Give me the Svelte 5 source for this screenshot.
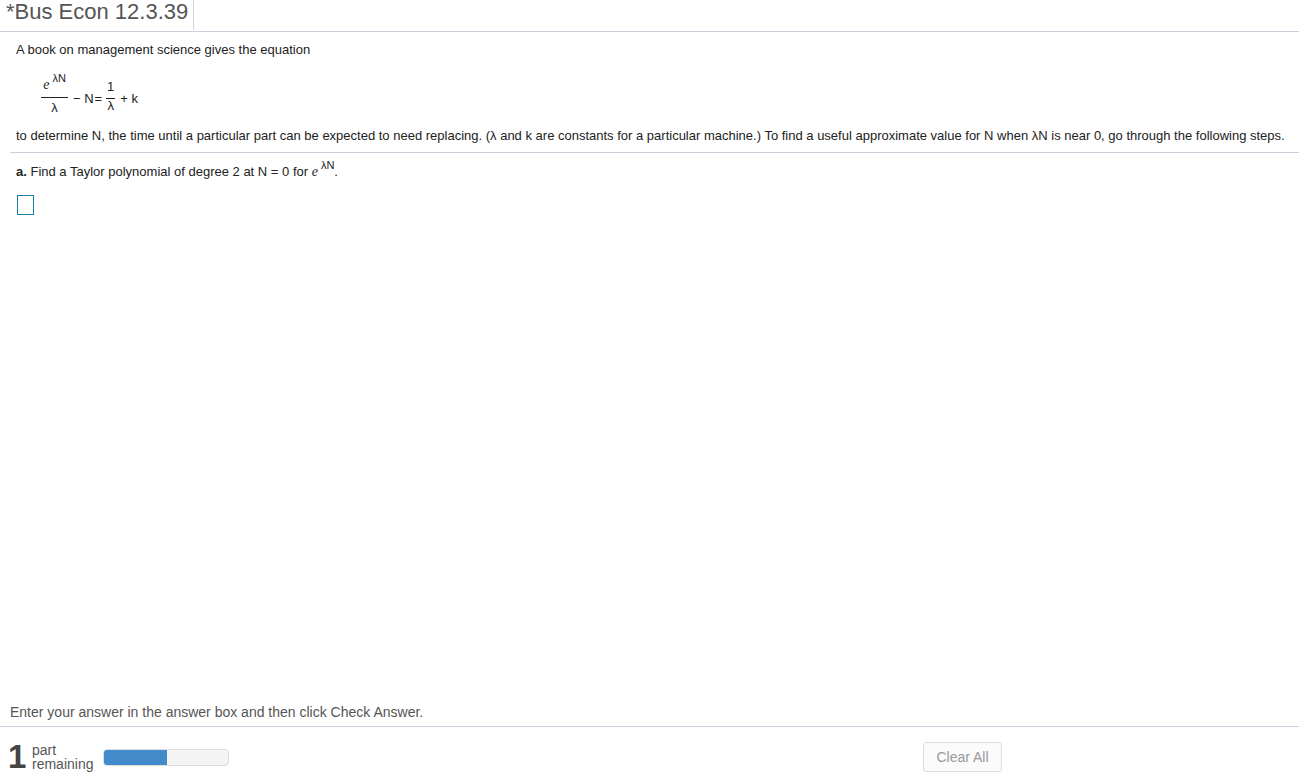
<script>
  const progress = 51;
</script>

<div class="page">
  <header class="titlebar">
    <h1 class="title">*Bus Econ 12.3.39</h1>
  </header>

  <main class="question">
    <p class="intro">A book on management science gives the equation</p>

    <div class="equation">
      <span class="frac first">
        <span class="num"><i class="e">e</i><span class="sup">λN</span></span>
        <span class="den">λ</span>
      </span>
      <span class="mid">− N<span class="eq">=</span></span>
      <span class="frac second">
        <span class="num">1</span>
        <span class="den">λ</span>
      </span>
      <span class="tail">+ k</span>
    </div>

    <p class="para">to determine N, the time until a particular part can be expected to need replacing. (λ and k are constants for a particular machine.) To find a useful approximate value for N when λN is near 0, go through the following steps.</p>
  </main>

  <hr class="rule" />

  <section class="part">
    <p class="parta"><b>a.</b> Find a Taylor polynomial of degree 2 at N = 0 for <i class="e">e</i><span class="supa">λN</span>.</p>
    <div class="answer"></div>
  </section>

  <footer class="bottom">
    <p class="hint">Enter your answer in the answer box and then click Check Answer.</p>
    <div class="bar">
      <span class="count">1</span>
      <span class="label">part<br />remaining</span>
      <div class="track"><div class="fill" style="width: {progress}%"></div></div>
      <button class="clear" disabled>Clear All</button>
    </div>
  </footer>
</div>

<style>
  :global(body) {
    margin: 0;
    background: #fff;
  }
  .page {
    height: 777px;
    width: 1299px;
    display: flex;
    flex-direction: column;
    overflow: hidden;
    font-family: "Liberation Sans", Arial, sans-serif;
    font-size: 13px;
    color: #222;
  }
  .titlebar {
    height: 31px;
    border-bottom: 1px solid #ccd0dc;
    flex: none;
  }
  .title {
    display: inline-block;
    margin: 0;
    height: 30px;
    padding: 0 5px 0 6px;
    border-right: 1px solid #d0d4de;
    font-size: 22px;
    font-weight: 400;
    line-height: 24px;
    color: #555;
  }
  .question {
    padding: 0 0 0 16px;
  }
  .intro {
    margin: 10px 0 0;
    line-height: 15px;
  }
  .equation {
    display: flex;
    align-items: center;
    margin: 13px 0 0 25px;
    height: 56px;
  }
  .frac {
    display: flex;
    flex-direction: column;
    align-items: center;
    align-self: flex-start;
  }
  .num {
    border-bottom: 1px solid #222;
    text-align: center;
    line-height: 14px;
    width: 100%;
    padding-bottom: 4px;
  }
  .den {
    line-height: 13px;
  }
  .first {
    width: 27px;
  }
  .first .num {
    height: 20px;
    line-height: 15px;
    padding: 7px 0 0;
  }
  .first .den {
    padding-top: 3px;
  }
  .second {
    width: 9px;
    margin: 10px 0 0 4px;
  }
  .mid {
    margin-left: 5px;
  }
  .eq {
    margin-left: 1px;
  }
  .tail {
    margin-left: 5px;
  }
  .e {
    font-family: "Liberation Serif", serif;
    font-size: 14px;
  }
  .sup {
    font-size: 11px;
    position: relative;
    top: -7px;
    margin-left: 3px;
  }
  .para {
    margin: 2px 0 0;
    line-height: 15px;
    white-space: nowrap;
  }
  .rule {
    margin: 9px 0 0 10px;
    border: 0;
    border-top: 1px solid #ccd0dc;
  }
  .part {
    padding-left: 16px;
    flex: 1;
  }
  .parta {
    margin: 11px 0 0;
    line-height: 15px;
  }
  .supa {
    font-size: 11px;
    position: relative;
    top: -7px;
    margin-left: 3px;
  }
  .answer {
    width: 15px;
    height: 18px;
    margin: 15px 0 0 1px;
    border: 1px solid #1c7da3;
  }
  .bottom {
    flex: none;
    margin-bottom: -10px;
  }
  .hint {
    margin: 0 0 0 10px;
    font-size: 14px;
    line-height: 15px;
    color: #555;
  }
  .bar {
    display: flex;
    align-items: center;
    height: 60px;
    margin-top: 6px;
    border-top: 1px solid #ccd0dc;
    padding-left: 8px;
    color: #555;
  }
  .count {
    font-size: 33px;
    font-weight: 700;
    width: 24px;
    color: #444;
  }
  .label {
    font-size: 14px;
    line-height: 14px;
    width: 71px;
  }
  .track {
    width: 124px;
    height: 15px;
    background: #f4f4f4;
    border: 1px solid #ddd;
    border-radius: 4px;
    overflow: hidden;
  }
  .fill {
    height: 100%;
    background: #428bca;
  }
  .clear {
    margin-left: 694px;
    width: 79px;
    height: 30px;
    padding: 0;
    background: #fbfbfb;
    border: 1px solid #ddd;
    border-radius: 3px;
    font-family: inherit;
    font-size: 14px;
    color: #999;
  }
</style>
